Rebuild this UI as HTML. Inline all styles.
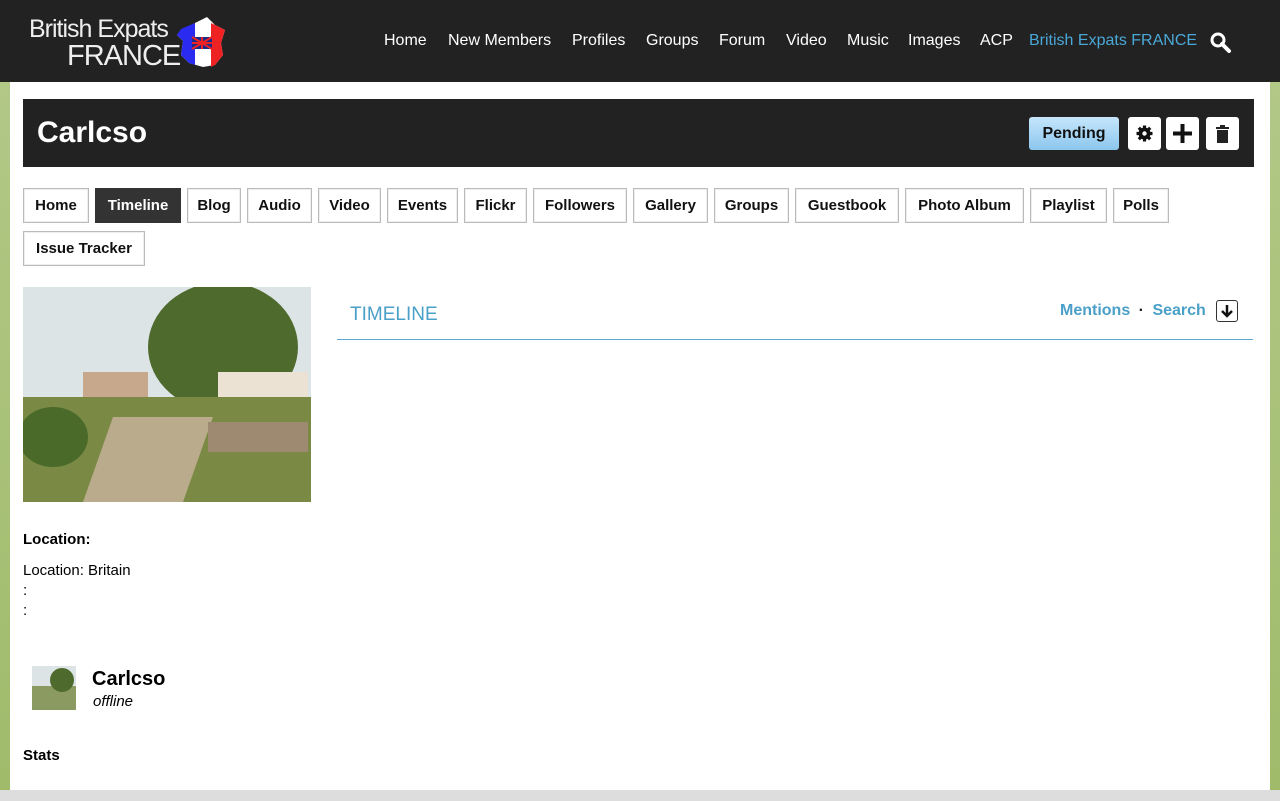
<!DOCTYPE html>
<html><head><style>
body{margin:0;width:1280px;height:801px;overflow:hidden;background:linear-gradient(#b4c98a,#9fbb6a);font-family:"Liberation Sans",sans-serif;position:relative}
.top{position:absolute;left:0;top:0;width:1280px;height:82px;background:#222}
.main{position:absolute;left:10px;top:82px;width:1260px;height:708px;background:#fff}
.bot{position:absolute;left:0;top:790px;width:1280px;height:11px;background:#ddd}
.nav{position:absolute;top:32px;font-size:16px;color:#fff}
.nav span{position:absolute;white-space:nowrap}
.hdr{position:absolute;left:23px;top:99px;width:1231px;height:68px;background:#222}
.tab{position:absolute;top:188px;border:1px solid #bbb;box-sizing:border-box;height:35px;font-weight:bold;font-size:15px;line-height:34px;text-align:center;color:#111;box-shadow:inset 0 0 0 1px #eee}
.ib{position:absolute;top:117px;width:33px;height:33px;background:#fff;border-radius:3px}
</style></head><body>
<div class="top"></div>
<div style="position:absolute;left:29px;top:16px;color:#eee;font-size:25px;line-height:27px;letter-spacing:-1px">British Expats<br><span style="margin-left:38px;font-size:29px">FRANCE</span></div>
<svg style="position:absolute;left:175px;top:15px" width="52" height="55"><polygon points="20,8 32,2 40,10 50,15 46,28 48,40 40,50 28,52 14,48 6,40 8,26 2,20 10,14" fill="#fff"/><polygon points="20,8 6,14 2,20 8,26 6,40 14,48 20,50" fill="#2a2af0"/><polygon points="36,8 50,15 46,28 48,40 40,50 36,52" fill="#e22"/><rect x="17" y="22" width="20" height="12" fill="#1a2a8a"/><path d="M17 22L37 34M37 22L17 34M27 22V34M17 28H37" stroke="#e22" stroke-width="2"/></svg>
<div class="nav">
<span style="left:384px">Home</span><span style="left:448px">New Members</span><span style="left:572px">Profiles</span><span style="left:646px">Groups</span><span style="left:719px">Forum</span><span style="left:786px">Video</span><span style="left:847px">Music</span><span style="left:908px">Images</span><span style="left:980px">ACP</span><span style="left:1029px;color:#4aa8d8">British Expats FRANCE</span></div>
<svg style="position:absolute;left:1209px;top:31px" width="24" height="24"><circle cx="9" cy="9" r="6" stroke="#fff" stroke-width="3" fill="none"/><path d="M13 13L20 20" stroke="#fff" stroke-width="4" stroke-linecap="round"/></svg>
<div class="main"></div><div class="bot"></div>
<div class="hdr"><div style="position:absolute;left:14px;top:17px;color:#fff;font-weight:bold;font-size:30px">Carlcso</div></div>
<div style="position:absolute;left:1029px;top:117px;width:90px;height:33px;border-radius:3px;background:linear-gradient(#c5e6fb,#8cc6ee);font-weight:bold;font-size:16px;line-height:34px;text-align:center;color:#111">Pending</div>
<div class="ib" style="left:1128px"><svg width="33" height="33"><g transform="translate(16.5 16.5)" fill="#111"><circle r="6"/><g stroke="#111" stroke-width="3.2"><path d="M0 -8V8M-8 0H8M-5.7 -5.7L5.7 5.7M5.7 -5.7L-5.7 5.7"/></g><circle r="2.2" fill="#fff"/></g></svg></div>
<div class="ib" style="left:1166px"><svg width="33" height="33"><path d="M16.5 7V26M7 16.5H26" stroke="#111" stroke-width="4"/></svg></div>
<div class="ib" style="left:1206px"><svg width="33" height="33"><rect x="10" y="10" width="13" height="2" fill="#222"/><rect x="14" y="8" width="5" height="2" fill="#222"/><rect x="11" y="13" width="11" height="13" fill="#222"/></svg></div>
<div class="tab" style="left:23px;width:66px">Home</div>
<div class="tab" style="left:95px;width:86px;background:#333;color:#fff;border-color:#333;box-shadow:none">Timeline</div>
<div class="tab" style="left:187px;width:54px">Blog</div>
<div class="tab" style="left:247px;width:65px">Audio</div>
<div class="tab" style="left:318px;width:63px">Video</div>
<div class="tab" style="left:387px;width:71px">Events</div>
<div class="tab" style="left:464px;width:63px">Flickr</div>
<div class="tab" style="left:533px;width:94px">Followers</div>
<div class="tab" style="left:633px;width:75px">Gallery</div>
<div class="tab" style="left:714px;width:75px">Groups</div>
<div class="tab" style="left:795px;width:104px">Guestbook</div>
<div class="tab" style="left:905px;width:119px">Photo Album</div>
<div class="tab" style="left:1030px;width:77px">Playlist</div>
<div class="tab" style="left:1113px;width:56px">Polls</div>
<div class="tab" style="left:23px;top:231px;width:122px">Issue Tracker</div>
<svg style="position:absolute;left:23px;top:287px" width="288" height="215"><rect width="288" height="215" fill="#b9c8c4"/><rect y="0" width="288" height="110" fill="#dde4e6"/><ellipse cx="200" cy="60" rx="75" ry="65" fill="#4e6a2c"/><rect x="195" y="85" width="90" height="45" fill="#ebe2d4"/><rect x="60" y="85" width="65" height="40" fill="#c8a88c"/><rect y="110" width="288" height="105" fill="#7a8a44"/><polygon points="90,130 190,130 160,215 60,215" fill="#b9ab8c"/><rect x="185" y="135" width="100" height="30" fill="#9d8a70"/><ellipse cx="30" cy="150" rx="35" ry="30" fill="#4a6a2a"/></svg>
<div style="position:absolute;left:23px;top:531px;font-weight:bold;font-size:15px">Location:</div>
<div style="position:absolute;left:23px;top:561px;font-size:15px;line-height:20px">Location: Britain<br>:<br>:</div>
<svg style="position:absolute;left:32px;top:666px" width="44" height="44"><rect width="44" height="44" fill="#8a9a60"/><rect width="44" height="20" fill="#dde4e6"/><ellipse cx="30" cy="14" rx="12" ry="12" fill="#4e6a2c"/></svg>
<div style="position:absolute;left:92px;top:668px;font-weight:bold;font-size:20px">Carlcso</div>
<div style="position:absolute;left:93px;top:693px;font-style:italic;font-size:15px">offline</div>
<div style="position:absolute;left:23px;top:747px;font-weight:bold;font-size:15px">Stats</div>
<div style="position:absolute;left:350px;top:304px;color:#4aa0c8;font-size:19px">TIMELINE</div>
<div style="position:absolute;left:1060px;top:302px;color:#4aa0c8;font-size:16px;font-weight:bold">Mentions <span style="color:#222;margin:0 4px">·</span> Search</div>
<div style="position:absolute;left:1216px;top:300px;width:22px;height:22px;border:1px solid #333;border-radius:3px;box-sizing:border-box"><svg width="20" height="20"><path d="M10 4V15M5 10L10 15L15 10" stroke="#111" stroke-width="2.5" fill="none"/></svg></div>
<div style="position:absolute;left:337px;top:339px;width:916px;height:1px;background:#5aa8cc"></div>
</body></html>
